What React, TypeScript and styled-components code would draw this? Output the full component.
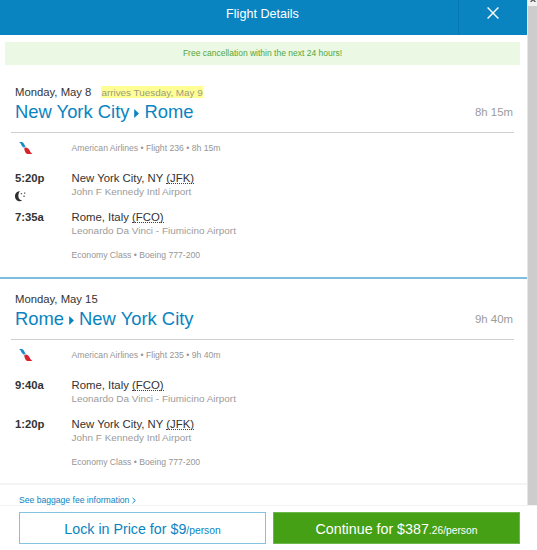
import React from 'react';
import styled, { createGlobalStyle } from 'styled-components';

const GlobalStyle = createGlobalStyle`
  * { box-sizing: border-box; }
  html, body { margin: 0; padding: 0; overflow: hidden; background: #fff; }
  body { font-family: "Liberation Sans", Arial, sans-serif; color: #333; }
`;

const Dialog = styled.div`
  width: 537px;
  height: 550px;
  display: flex;
  flex-direction: column;
  overflow: hidden;
`;

const Viewport = styled.div`
  height: 505px;
  display: flex;
`;

const Content = styled.main`
  width: 527px;
  display: flex;
  flex-direction: column;
`;

const Scrollbar = styled.div`
  width: 10px;
  background: #cdcdcd;
  border-left: 1px solid #e6e6e6;
`;

const ScrollButton = styled.div`
  height: 6px;
  background: #f1f1f1;
  display: flex;
  justify-content: center;
  svg { display: block; }
`;

const Header = styled.header`
  height: 35px;
  flex: none;
  display: flex;
  background: #0a84c1;
  color: #fff;
`;

const HeaderTitle = styled.h1`
  flex: 1;
  margin: 0;
  padding-left: 67px;
  text-align: center;
  font-size: 12.6px;
  font-weight: 400;
  line-height: 28px;
`;

const CloseButton = styled.button`
  width: 69px;
  padding: 7px 0 0;
  border: 0;
  border-left: 1px solid #0878b3;
  background: none;
  color: #fff;
  display: flex;
  justify-content: center;
  align-items: flex-start;
`;

const Banner = styled.div`
  flex: none;
  height: 23px;
  margin: 7px 7px 0 5px;
  background: #eaf8e4;
  color: #55a63a;
  text-align: center;
  font-size: 8.5px;
  line-height: 23px;
`;

const LegSection = styled.section<{ $height: number; $top: number; $edge: string }>`
  flex: none;
  height: ${p => p.$height}px;
  padding: ${p => p.$top}px 13px 0 11px;
  border-bottom: 2px solid ${p => p.$edge};
`;

const LegHeader = styled.div`
  height: 49px;
  padding: 0 1px 0 4px;
  border-bottom: 1px solid #d0d0d0;
`;

const DateLine = styled.div`
  display: flex;
  gap: 10px;
  height: 16px;
  font-size: 11.3px;
  line-height: 16px;
`;

const Arrival = styled.span`
  height: 12px;
  margin-top: 2px;
  line-height: 13px;
  font-size: 9.9px;
  background: #ffff94;
  color: #9b9b80;
`;

const RouteLine = styled.div`
  display: flex;
  justify-content: space-between;
  height: 24px;
  line-height: 24px;
`;

const Route = styled.h2`
  margin: 0;
  display: flex;
  align-items: center;
  font-size: 18.4px;
  font-weight: 400;
  color: #0a84c1;
  svg { margin: 3px 5px 0 5px; }
`;

const Duration = styled.span`
  font-size: 11.4px;
  color: #9b9b9b;
`;

const Row = styled.div<{ $height: number }>`
  display: flex;
  height: ${p => p.$height}px;
  padding-left: 4px;
`;

const Marker = styled.div`
  width: 56.5px;
  flex: none;
  font-size: 11.3px;
  font-weight: 700;
  line-height: 15px;
  svg { display: block; }
`;

const Meta = styled.div`
  font-size: 8.65px;
  line-height: 30px;
  color: #969696;
`;

const City = styled.div`
  font-size: 11.35px;
  line-height: 15px;
  white-space: nowrap;
`;

const Code = styled.abbr`
  text-decoration: none;
  display: inline-block;
  height: 13px;
  line-height: 15px;
  vertical-align: top;
  border-bottom: 1px dotted #444;
`;

const Airport = styled.div`
  margin-top: -1px;
  font-size: 9.95px;
  line-height: 13px;
  color: #9b9b9b;
  white-space: nowrap;
`;

const BaggageLink = styled.a`
  display: flex;
  align-items: center;
  gap: 3px;
  height: 20px;
  padding: 10px 0 0 19px;
  font-size: 8.6px;
  line-height: 10px;
  color: #0a84c1;
`;

const Footer = styled.footer`
  height: 45px;
  padding: 6px 17px 6px 19px;
  display: flex;
  gap: 7px;
  border-top: 1px solid #f2f2f2;
`;

const ActionButton = styled.button<{ $primary?: boolean }>`
  width: 247px;
  height: 32px;
  padding: 2px 0 0;
  border: 1px solid ${p => (p.$primary ? '#6db64b' : '#85c1e0')};
  background: ${p => (p.$primary ? '#46a016' : '#fff')};
  color: ${p => (p.$primary ? '#fff' : '#0a84c1')};
  font-family: inherit;
  font-size: 14.25px;
  line-height: 28px;
  white-space: nowrap;
`;

const Small = styled.span`
  font-size: 10.3px;
`;

const LogoSlot = styled.div`
  padding: 9px 0 0 4px;
`;

const MoonSlot = styled.div`
  padding-top: 5px;
`;

const EquipmentMeta = styled(Meta)`
  line-height: 13px;
`;

const RouteArrow = () => (
  <svg width="5" height="9" viewBox="0 0 5 9"><path d="M0.2 0L5 4.5L0.2 9Z" fill="#0a84c1" /></svg>
);

const AirlineLogo = () => (
  <svg width="14" height="13" viewBox="0 0 14 13">
    <path d="M0 0H2.8Q4.6 0.6 5.2 2.2L6.6 5L4.3 5.4L2.6 3.6Q2 1.4 0 0Z" fill="#168dcc" />
    <path d="M4.1 5.2L6.5 5L7.4 6L5.4 7.4Z" fill="#c3ccd6" />
    <path d="M5.2 6.6L7.2 5.4Q9.6 6 10.4 8Q11.2 10.8 13.4 12H8Q6.4 11.2 5.8 9Z" fill="#d9232e" />
  </svg>
);

const Moon = () => (
  <svg width="12" height="11" viewBox="0 0 12 11">
    <path d="M5 0.2C1.8 0.2 0 2.5 0 5.2C0 8 2 10.2 4.8 10.2C5.8 10.2 6.6 10 7.2 9.5C2.6 8.8 2.4 2.8 5 0.2Z" fill="#2e2e2e" />
    <path d="M5.8 2h1.3v1.3H5.8zM9 1.5h1.3v1.3H9zM8.4 4.6h1.3v1.3H8.4z" fill="#555" />
  </svg>
);

type Stop = { time: string; city: string; code: string; airport: string; overnight?: boolean };

const jfk = { city: 'New York City, NY', code: 'JFK', airport: 'John F Kennedy Intl Airport' };
const fco = { city: 'Rome, Italy', code: 'FCO', airport: 'Leonardo Da Vinci - Fiumicino Airport' };

type LegProps = {
  date: string; arrival?: string; from: string; to: string; duration: string;
  flight: string; stops: Stop[]; height: number; top: number; edge: string;
};

function Leg({ date, arrival, from, to, duration, flight, stops, height, top, edge }: LegProps) {
  return (
    <LegSection $height={height} $top={top} $edge={edge}>
      <LegHeader>
        <DateLine><span>{date}</span>{arrival && <Arrival>{arrival}</Arrival>}</DateLine>
        <RouteLine>
          <Route>{from}<RouteArrow />{to}</Route>
          <Duration>{duration}</Duration>
        </RouteLine>
      </LegHeader>
      <Row $height={38}>
        <Marker><LogoSlot><AirlineLogo /></LogoSlot></Marker>
        <Meta>American Airlines • Flight {flight} • {duration}</Meta>
      </Row>
      {stops.map(s => (
        <Row $height={39} key={s.code}>
          <Marker>{s.time}{s.overnight && <MoonSlot><Moon /></MoonSlot>}</Marker>
          <div>
            <City>{s.city} <Code>({s.code})</Code></City>
            <Airport>{s.airport}</Airport>
          </div>
        </Row>
      ))}
      <Row $height={20}>
        <Marker />
        <EquipmentMeta>Economy Class • Boeing 777-200</EquipmentMeta>
      </Row>
    </LegSection>
  );
}

export default function App() {
  return (
    <>
      <GlobalStyle />
      <Dialog>
        <Viewport>
          <Content>
            <Header>
              <HeaderTitle>Flight Details</HeaderTitle>
              <CloseButton aria-label="Close">
                <svg width="12" height="12" viewBox="0 0 12 12" stroke="#fff" strokeWidth="1.4">
                  <path d="M0.6 0.6L11.4 11.4M11.4 0.6L0.6 11.4" />
                </svg>
              </CloseButton>
            </Header>
            <Banner>Free cancellation within the next 24 hours!</Banner>
            <Leg
              date="Monday, May 8" arrival="arrives Tuesday, May 9" from="New York City" to="Rome"
              duration="8h 15m" flight="236" height={214} top={19} edge="#7dbddf"
              stops={[{ time: '5:20p', ...jfk, overnight: true }, { time: '7:35a', ...fco }]}
            />
            <Leg
              date="Monday, May 15" from="Rome" to="New York City"
              duration="9h 40m" flight="235" height={206} top={12} edge="#f4f4f4"
              stops={[{ time: '9:40a', ...fco }, { time: '1:20p', ...jfk }]}
            />
            <BaggageLink>
              See baggage fee information
              <svg width="4" height="7" viewBox="0 0 4 7" fill="none" stroke="#0a84c1"><path d="M0.5 0.8L3.3 3.5L0.5 6.2" /></svg>
            </BaggageLink>
          </Content>
          <Scrollbar>
            <ScrollButton>
              <svg width="6" height="3" viewBox="0 0 6 3"><path d="M0 2L1.5 0H4.5L6 2H4.5L3 0.5L1.5 2Z" fill="#555" /></svg>
            </ScrollButton>
          </Scrollbar>
        </Viewport>
        <Footer>
          <ActionButton>Lock in Price for $9<Small>/person</Small></ActionButton>
          <ActionButton $primary>Continue for $387<Small>.26/person</Small></ActionButton>
        </Footer>
      </Dialog>
    </>
  );
}
